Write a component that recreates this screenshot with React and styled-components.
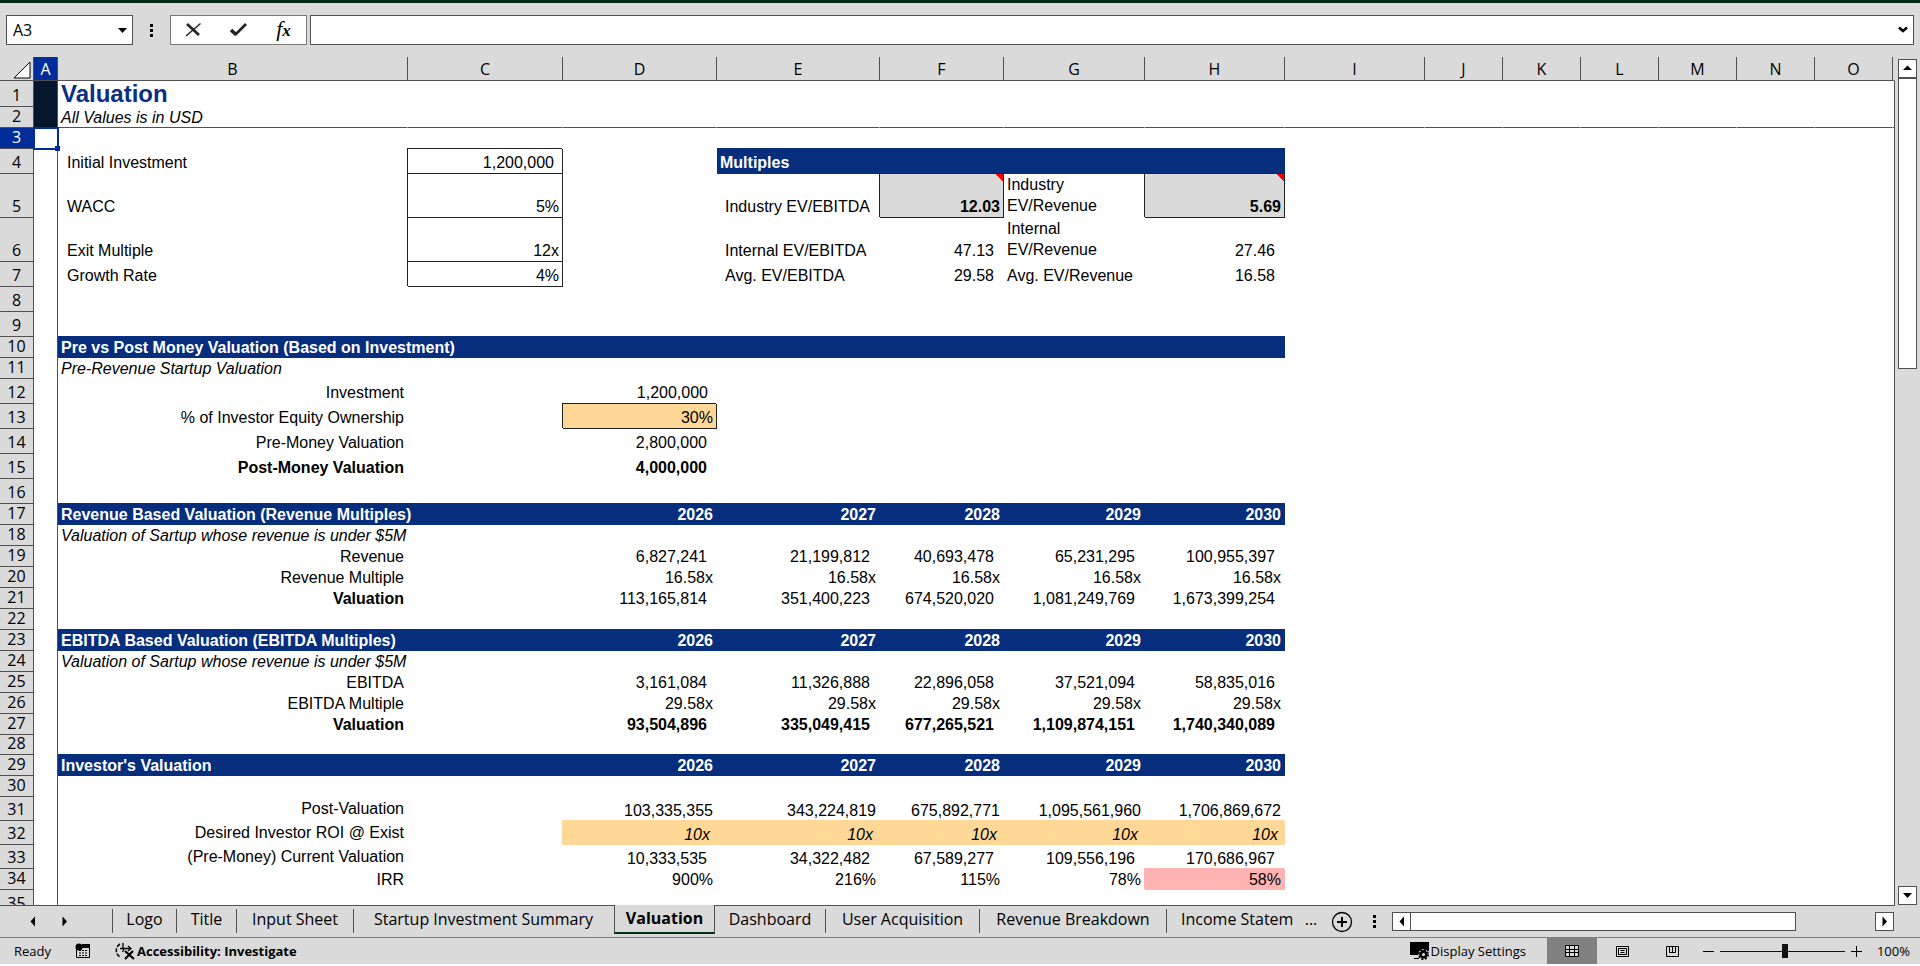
import React, { useState } from 'react'
import styled, { createGlobalStyle, css } from 'styled-components'

const GlobalStyle = createGlobalStyle`
  * {
    box-sizing: border-box;
  }

  body {
    margin: 0;
    background: #fff;
    color: #000;
    font-family: 'Open Sans', 'Noto Sans', sans-serif;
  }

  button, input {
    margin: 0;
    padding: 0;
    border: none;
    background: none;
    color: inherit;
    font: inherit;
  }
`

const columns = [
  { name: 'A', width: 24 },
  { name: 'B', width: 350 },
  { name: 'C', width: 155 },
  { name: 'D', width: 154 },
  { name: 'E', width: 163 },
  { name: 'F', width: 124 },
  { name: 'G', width: 141 },
  { name: 'H', width: 140 },
  { name: 'I', width: 140 },
  { name: 'J', width: 78 },
  { name: 'K', width: 78 },
  { name: 'L', width: 78 },
  { name: 'M', width: 78 },
  { name: 'N', width: 78 },
  { name: 'O', width: 78 },
]

const years = ['2026', '2027', '2028', '2029', '2030']
const yearColumns = ['D', 'E', 'F', 'G', 'H']

// helpers that build the cells of one row
const series = (values, style) => {
  const cells = {}
  values.forEach((value, i) => {
    cells[yearColumns[i]] = { text: value, align: 'right', ...style }
  })
  return cells
}

const label = (text, style) => ({ B: { text, align: 'right', ...style } })

const band = (title, values = []) => ({
  B: { text: title, bold: true, fill: 'navy' },
  C: { fill: 'navy' },
  ...series(yearColumns.map((_, i) => values[i]), { bold: true, fill: 'navy' }),
})

const note = (text) => ({ B: { text, italic: true } })
const boxed = { align: 'right', box: '#222' }
const money = { pad: 9 }

const rows = [
  { height: 26, cells: { A: { fill: 'ink' }, B: { text: 'Valuation', title: true, bold: true } } },
  { height: 21, line: true, cells: { A: { fill: 'ink' }, B: { text: 'All Values is in USD', italic: true } } },
  { height: 21, cells: { A: { selected: true } } },
  {
    height: 25,
    cells: {
      B: { text: 'Initial Investment', pad: 9 },
      C: { text: '1,200,000', ...boxed, pad: 8 },
      E: { text: 'Multiples', bold: true, fill: 'navy' },
      F: { fill: 'navy' },
      G: { fill: 'navy' },
      H: { fill: 'navy' },
    },
  },
  {
    height: 44,
    cells: {
      B: { text: 'WACC', pad: 9 },
      C: { text: '5%', ...boxed },
      E: { text: 'Industry EV/EBITDA', pad: 8 },
      F: { text: '12.03', bold: true, fill: 'grey', comment: true, ...boxed },
      G: { text: 'Industry EV/Revenue', wrap: true },
      H: { text: '5.69', bold: true, fill: 'grey', comment: true, ...boxed },
    },
  },
  {
    height: 44,
    cells: {
      B: { text: 'Exit Multiple', pad: 9 },
      C: { text: '12x', ...boxed },
      E: { text: 'Internal EV/EBITDA', pad: 8 },
      F: { text: '47.13', align: 'right', ...money },
      G: { text: 'Internal EV/Revenue', wrap: true },
      H: { text: '27.46', align: 'right', ...money },
    },
  },
  {
    height: 25,
    cells: {
      B: { text: 'Growth Rate', pad: 9 },
      C: { text: '4%', ...boxed },
      E: { text: 'Avg. EV/EBITDA', pad: 8 },
      F: { text: '29.58', align: 'right', ...money },
      G: { text: 'Avg. EV/Revenue' },
      H: { text: '16.58', align: 'right', ...money },
    },
  },
  { height: 25 },
  { height: 25 },
  { height: 21, cells: band('Pre vs Post Money Valuation (Based on Investment)') },
  { height: 21, cells: note('Pre-Revenue Startup Valuation') },
  { height: 25, cells: { ...label('Investment'), ...series(['1,200,000'], { pad: 8 }) } },
  {
    height: 25,
    cells: {
      ...label('% of Investor Equity Ownership'),
      ...series(['30%'], { fill: 'orange', box: '#222' }),
    },
  },
  { height: 25, cells: { ...label('Pre-Money Valuation'), ...series(['2,800,000'], money) } },
  {
    height: 25,
    cells: {
      ...label('Post-Money Valuation', { bold: true }),
      ...series(['4,000,000'], { ...money, bold: true }),
    },
  },
  { height: 25 },
  { height: 21, cells: band('Revenue Based Valuation (Revenue Multiples)', years) },
  { height: 21, cells: note('Valuation of Sartup whose revenue is under $5M') },
  {
    height: 21,
    cells: {
      ...label('Revenue'),
      ...series(['6,827,241', '21,199,812', '40,693,478', '65,231,295', '100,955,397'], money),
    },
  },
  {
    height: 21,
    cells: { ...label('Revenue Multiple'), ...series(Array(5).fill('16.58x')) },
  },
  {
    height: 21,
    cells: {
      ...label('Valuation', { bold: true }),
      ...series(['113,165,814', '351,400,223', '674,520,020', '1,081,249,769', '1,673,399,254'], money),
    },
  },
  { height: 21 },
  { height: 21, cells: band('EBITDA Based Valuation (EBITDA Multiples)', years) },
  { height: 21, cells: note('Valuation of Sartup whose revenue is under $5M') },
  {
    height: 21,
    cells: {
      ...label('EBITDA'),
      ...series(['3,161,084', '11,326,888', '22,896,058', '37,521,094', '58,835,016'], money),
    },
  },
  {
    height: 21,
    cells: { ...label('EBITDA Multiple'), ...series(Array(5).fill('29.58x')) },
  },
  {
    height: 21,
    cells: {
      ...label('Valuation', { bold: true }),
      ...series(['93,504,896', '335,049,415', '677,265,521', '1,109,874,151', '1,740,340,089'], {
        ...money,
        bold: true,
      }),
    },
  },
  { height: 20 },
  { height: 21, cells: band("Investor's Valuation", years) },
  { height: 21 },
  {
    height: 24,
    cells: {
      ...label('Post-Valuation', { middle: true }),
      ...series(['103,335,355', '343,224,819', '675,892,771', '1,095,561,960', '1,706,869,672']),
    },
  },
  {
    height: 24,
    cells: {
      ...label('Desired Investor ROI @ Exist', { middle: true }),
      ...series(Array(5).fill('10x'), { italic: true, fill: 'orange', pad: 6 }),
    },
  },
  {
    height: 24,
    cells: {
      ...label('(Pre-Money) Current Valuation', { middle: true }),
      ...series(['10,333,535', '34,322,482', '67,589,277', '109,556,196', '170,686,967'], money),
    },
  },
  {
    height: 21,
    cells: {
      ...label('IRR'),
      ...series(['900%', '216%', '115%', '78%']),
      H: { text: '58%', align: 'right', fill: 'pink' },
    },
  },
  { height: 25 },
]

const tabs = [
  { name: 'Logo', width: 64 },
  { name: 'Title', width: 60 },
  { name: 'Input Sheet', width: 117 },
  { name: 'Startup Investment Summary', width: 260 },
  { name: 'Valuation', width: 101 },
  { name: 'Dashboard', width: 111 },
  { name: 'User Acquisition', width: 154 },
  { name: 'Revenue Breakdown', width: 187 },
]

const Arrow = ({ dir }) => {
  const points = {
    up: '1,7 10,7 5.5,2.5',
    down: '1,3 10,3 5.5,8',
    left: '8,0.5 8,10.5 3.5,5.5',
    right: '3.5,0.5 3.5,10.5 8,5.5',
  }
  return (
    <svg width="11" height="11" viewBox="0 0 11 11" aria-hidden="true">
      <polygon points={points[dir]} />
    </svg>
  )
}

const Cell = ({ cell = {}, lined, tall }) => (
  <Td
    $align={cell.align}
    $bold={cell.bold}
    $italic={cell.italic}
    $title={cell.title}
    $fill={cell.fill}
    $box={cell.box}
    $pad={cell.pad}
    $wrap={cell.wrap}
    $middle={cell.middle}
    $comment={cell.comment}
    $selected={cell.selected}
    $lined={lined}
    $tall={tall}
  >
    {cell.text}
  </Td>
)

const App = () => {
  const [activeTab, setActiveTab] = useState('Valuation')
  const [zoom, setZoom] = useState(100)
  const [formula, setFormula] = useState('')

  return (
    <Page>
      <GlobalStyle />
      <TopStrip />

      <FormulaRow>
        <NameBox>
          <input aria-label="Name box" defaultValue="A3" />
          <button aria-label="Open name list"><Arrow dir="down" /></button>
        </NameBox>
        <Dots />
        <FormulaTools>
          <button aria-label="Cancel">
            <svg width="18" height="16" viewBox="0 0 18 16" fill="none" stroke="#222">
              <path d="M2 2L14 13" strokeWidth="2.6" />
              <path d="M15.500 1.500L1 14" strokeWidth="1.400" />
            </svg>
          </button>
          <button aria-label="Enter">
            <svg width="18" height="16" viewBox="0 0 18 16" fill="none" stroke="#222">
              <path d="M1 8L6 12.500" strokeWidth="3.600" />
              <path d="M5 13L16 2" strokeWidth="2.600" />
            </svg>
          </button>
          <button aria-label="Insert function"><Fx>f<small>x</small></Fx></button>
        </FormulaTools>
        <FormulaBox>
          <input
            aria-label="Formula bar"
            value={formula}
            onChange={(e) => setFormula(e.target.value)}
          />
          <button aria-label="Expand formula bar">
            <svg width="10" height="8" viewBox="0 0 10 8" fill="none" stroke="#000" strokeWidth="2.500">
              <path d="M1 1.500L5 5L9 1.500" />
            </svg>
          </button>
        </FormulaBox>
      </FormulaRow>

      <SheetArea>
        <Grid>
          <Table>
            <colgroup>
              <Col $width={34} />
              {columns.map((col) => <Col key={col.name} $width={col.width} />)}
              <col />
            </colgroup>
            <thead>
              <tr>
                <Corner>
                  <svg width="18" height="18" viewBox="0 0 18 18" aria-hidden="true">
                    <path d="M1 17L17 1V17Z" fill="#fff" stroke="#000" />
                  </svg>
                </Corner>
                {columns.map((col) => (
                  <ColHead key={col.name} scope="col" $active={col.name === 'A'}>{col.name}</ColHead>
                ))}
                <Filler as="th" $head />
              </tr>
            </thead>
            <tbody>
              {rows.map((row, i) => (
                <Row key={i} $height={row.height}>
                  <RowHead scope="row" $active={i === 2}>{i + 1}</RowHead>
                  {columns.map((col) => (
                    <Cell
                      key={col.name}
                      cell={row.cells?.[col.name]}
                      lined={row.line}
                      tall={row.height === 25 || row.height === 44}
                    />
                  ))}
                  <Filler $line={row.line} />
                </Row>
              ))}
            </tbody>
          </Table>
        </Grid>
        <VScroll>
          <ScrollButton aria-label="Scroll up"><Arrow dir="up" /></ScrollButton>
          <VTrack><VThumb /></VTrack>
          <ScrollButton aria-label="Scroll down"><Arrow dir="down" /></ScrollButton>
        </VScroll>
      </SheetArea>

      <TabBar>
        <TabArrows>
          <button aria-label="Previous sheet"><Arrow dir="left" /></button>
          <button aria-label="Next sheet"><Arrow dir="right" /></button>
        </TabArrows>
        <Tabs>
          {tabs.map((tab, i) => (
            <Tab
              key={tab.name}
              $width={tab.width}
              $active={tab.name === activeTab}
              $last={tabs[i + 1]?.name === activeTab}
              onClick={() => setActiveTab(tab.name)}
            >
              {tab.name}
            </Tab>
          ))}
          <CutTab>Income Statem</CutTab>
          <More aria-label="More sheets">...</More>
          <AddSheet aria-label="New sheet">
            <svg width="22" height="22" viewBox="0 0 22 22" fill="none" stroke="#000">
              <circle cx="11" cy="11" r="9.500" strokeWidth="1.300" />
              <path d="M6 11H16M11 6V16" strokeWidth="2" />
            </svg>
          </AddSheet>
        </Tabs>
        <Dots $narrow />
        <HScroll>
          <ScrollButton aria-label="Scroll left"><Arrow dir="left" /></ScrollButton>
          <HTrack><HThumb /></HTrack>
          <ScrollButton aria-label="Scroll right"><Arrow dir="right" /></ScrollButton>
        </HScroll>
      </TabBar>

      <StatusBar>
        <StatusGroup>
          <span>Ready</span>
          <button aria-label="Record macro">
            <svg width="16" height="16" viewBox="0 0 16 16" aria-hidden="true">
              <path d="M1.500 5V14.500H14.500V2" fill="none" stroke="#000" />
              <path d="M7 1H15V5H7Z" />
              <circle cx="4" cy="4" r="3.500" />
              <path
                d="M4 7.500H6M7 7.500H9M10 7.500H12M4 10H6M7 10H9M10 10H12M4 12.500H6M7 12.500H9M10 12.500H12"
                stroke="#000"
              />
            </svg>
          </button>
          <Accessibility>
            <svg width="20" height="18" viewBox="0 0 20 18" fill="none" stroke="#000">
              <path d="M5 2C0 5 0 12 5 15" strokeWidth="1.500" strokeDasharray="4 1.500" />
              <path d="M8 1V6M5 6.500H16M13 4L16 6.500L13 9M9 7L7.500 10" strokeWidth="1.300" />
              <path d="M10 9L19 17M18 9L10 17" strokeWidth="2.200" />
            </svg>
            Accessibility: Investigate
          </Accessibility>
        </StatusGroup>
        <StatusGroup $end>
          <DisplaySettings>
            <svg width="20" height="18" viewBox="0 0 20 18" aria-hidden="true">
              <path d="M0 0H19V9H9V13H0Z" />
              <path d="M4 16.500H9" stroke="#000" />
              <circle cx="13.500" cy="12.500" r="5" fill="none" stroke="#dadada" />
              <circle cx="13.500" cy="12.500" r="4" />
              <circle
                cx="13.500"
                cy="12.500"
                r="4.600"
                fill="none"
                stroke="#000"
                strokeWidth="1.800"
                strokeDasharray="2 1.600"
              />
              <circle cx="13.500" cy="12.500" r="1.600" fill="#dadada" />
            </svg>
            Display Settings
          </DisplaySettings>
          <ViewButton aria-label="Normal" $active>
            <svg width="14" height="12" viewBox="0 0 14 12" stroke="#000" fill="#dadada">
              <path d="M0.500 0.500H13.500V11.500H0.500ZM0.500 4.500H13.500M0.500 7.500H13.500M4.500 0.500V11.500M9.500 0.500V11.500" />
            </svg>
          </ViewButton>
          <ViewButton aria-label="Page layout">
            <svg width="13" height="11" viewBox="0 0 13 11" stroke="#000" fill="none">
              <path d="M0.500 0.500H12.500V10.500H0.500ZM2.500 2.500H10.500V8.500H2.500ZM4.500 4.500H8.500M4.500 6.500H8.500" />
            </svg>
          </ViewButton>
          <ViewButton aria-label="Page break preview">
            <svg width="13" height="11" viewBox="0 0 13 11" stroke="#000" fill="none">
              <path d="M0.500 0.500H12.500V10.500H0.500ZM3.500 0.500V6.500H9.500V0.500M6.500 0.500V6.500" />
            </svg>
          </ViewButton>
          <ZoomControl>
            <button aria-label="Zoom out" onClick={() => setZoom(zoom - 10)}>
              <svg width="11" height="11" viewBox="0 0 11 11" stroke="#000"><path d="M0 5.500H11" /></svg>
            </button>
            <ZoomSlider
              type="range"
              aria-label="Zoom"
              min="0"
              max="192"
              value={zoom}
              onChange={(e) => setZoom(Number(e.target.value))}
            />
            <button aria-label="Zoom in" onClick={() => setZoom(zoom + 10)}>
              <svg width="11" height="11" viewBox="0 0 11 11" stroke="#000"><path d="M0 5.500H11M5.500 0V11" /></svg>
            </button>
            <ZoomValue>{zoom}%</ZoomValue>
          </ZoomControl>
        </StatusGroup>
      </StatusBar>
    </Page>
  )
}

const chrome = '#dadada'
const line = '#505050'
const accent = '#002d9a'

const fills = {
  navy: '#072d7d',
  ink: '#05172d',
  grey: '#dadada',
  orange: '#ffd898',
  pink: '#ffb4b4',
}

const Page = styled.div`
  display: flex;
  flex-direction: column;
  height: 100vh;
  padding-bottom: 2px;
  overflow: hidden;
`

const TopStrip = styled.div`
  height: 3px;
  flex: none;
  background: #002b11;
`

/* formula bar */
const FormulaRow = styled.div`
  display: flex;
  align-items: center;
  flex: none;
  padding: 12px 6px;
  background: ${chrome};
`

const NameBox = styled.div`
  display: flex;
  align-items: center;
  width: 127px;
  height: 30px;
  border: 1px solid ${line};
  background: #fff;

  input {
    flex: 1;
    min-width: 0;
    padding-left: 6px;
    font-size: 16px;
  }

  button {
    display: flex;
    padding: 4px;
  }
`

const Dots = styled.span`
  width: ${(p) => (p.$narrow ? 36 : 37)}px;
  height: 13px;
  flex: none;
  background: linear-gradient(#000, #000) center top / 3px 3px no-repeat,
    linear-gradient(#000, #000) center / 3px 3px no-repeat,
    linear-gradient(#000, #000) center bottom / 3px 3px no-repeat;
`

const FormulaTools = styled.div`
  display: flex;
  width: 137px;
  height: 30px;
  margin-right: 3px;
  border: 1px solid #7a7a7a;
  background: #fff;

  button {
    display: flex;
    flex: 1;
    align-items: center;
    justify-content: center;
  }
`

const Fx = styled.span`
  font: italic 22px/24px 'Liberation Serif', serif;

  small {
    font-size: 17px;
    font-weight: 700;
  }
`

const FormulaBox = styled.div`
  display: flex;
  align-items: center;
  flex: 1;
  height: 30px;
  border: 1px solid ${line};
  background: #fff;

  input {
    flex: 1;
    min-width: 0;
    padding: 0 6px;
    font-size: 16px;
  }

  button {
    display: flex;
    padding: 5px;
  }
`

/* sheet */
const SheetArea = styled.div`
  display: flex;
  flex: 1;
  min-height: 0;
  background: ${chrome};
`

const Grid = styled.div`
  flex: 1;
  min-width: 0;
  overflow: hidden;
  border-bottom: 1px solid ${line};
  background: linear-gradient(#fff, #fff) 0 24px no-repeat;
`

const Table = styled.table`
  width: 100%;
  table-layout: fixed;
  border-collapse: separate;
  border-spacing: 0;
  font-size: 16px;
`

const Col = styled.col`
  width: ${(p) => p.$width}px;
`

const headCell = css`
  padding: 0 0 3px;
  border-right: 1px solid ${line};
  border-bottom: 1px solid ${line};
  background: ${(p) => (p.$active ? accent : chrome)};
  color: ${(p) => (p.$active ? '#fff' : '#000')};
  font-weight: 400;
  line-height: 16px;
  text-align: center;
  vertical-align: bottom;
`

const ColHead = styled.th`
  ${headCell}
  height: 24px;
`

const RowHead = styled.th`
  ${headCell}
`

const Corner = styled.td`
  padding: 0 2px 1px 0;
  border-right: 1px solid ${line};
  border-bottom: 1px solid ${line};
  background: ${chrome};
  line-height: 0;
  text-align: right;
  vertical-align: bottom;
`

const Row = styled.tr`
  height: ${(p) => p.$height}px;
`

const Td = styled.td`
  padding: 0 ${(p) => (p.$align === 'right' ? p.$pad || 3 : 0)}px ${(p) => (p.$tall ? 1 : 0)}px
    ${(p) => (p.$align === 'right' ? 0 : p.$pad || 3)}px;
  border: 0 solid transparent;
  border-right-width: 1px;
  border-bottom-width: 1px;
  font-family: 'Liberation Sans', Arial, sans-serif;
  font-weight: ${(p) => (p.$bold ? 700 : 400)};
  font-style: ${(p) => (p.$italic ? 'italic' : 'normal')};
  line-height: ${(p) => (p.$wrap ? 21 : 19)}px;
  text-align: ${(p) => p.$align || 'left'};
  vertical-align: ${(p) => (p.$middle ? 'middle' : 'bottom')};
  white-space: ${(p) => (p.$wrap ? 'normal' : 'nowrap')};

  ${(p) => p.$title && css`
    color: #0a2f86;
    font-size: 24px;
    line-height: 24px;
  `}

  ${(p) => p.$fill && css`
    background: ${fills[p.$fill]};
  `}

  ${(p) => p.$fill === 'navy' && css`
    box-shadow: 0 -1px 0 ${fills.navy};
    color: #fff;
  `}

  ${(p) => (p.$fill === 'orange' || p.$fill === 'pink') && css`
    box-shadow: -1px -1px 0 ${fills[p.$fill]};
  `}

  ${(p) => p.$box && css`
    border-color: ${p.$box};
    box-shadow: -1px -1px 0 ${p.$box};
  `}

  ${(p) => p.$comment && css`
    background: linear-gradient(45deg, transparent 50%, #f00 50%) right top / 7px 8px no-repeat,
      ${fills.grey};
  `}

  /* column A carries the frozen pane line on its right */
  &:nth-child(2) {
    border-right-color: ${line};
    border-bottom-width: ${(p) => (p.$lined ? 1 : 0)}px;
  }

  ${(p) => p.$lined && css`
    border-bottom-color: ${line};
  `}

  ${(p) => p.$selected && css`
    position: relative;
    outline: 2px solid ${accent};
    outline-offset: -1px;

    &::after {
      content: '';
      position: absolute;
      right: -3px;
      bottom: -2px;
      width: 5px;
      height: 5px;
      background: ${accent};
    }
  `}
`

const Filler = styled.td`
  padding: 0;
  border-right: 1px solid ${(p) => (p.$head ? chrome : line)};
  border-bottom: ${(p) => (p.$head || p.$line ? 1 : 0)}px solid ${line};
  background: ${(p) => (p.$head ? chrome : 'none')};
`

/* scroll bars */
const ScrollButton = styled.button`
  display: flex;
  align-items: center;
  justify-content: center;
  flex: none;
  width: 19px;
  height: 19px;
  border: 1px solid ${line};
  background: #fff;
`

const VScroll = styled.div`
  display: flex;
  flex-direction: column;
  flex: none;
  padding: 2px 3px 1px;
`

const VTrack = styled.div`
  flex: 1;
`

const VThumb = styled.div`
  height: 36%;
  border: 1px solid ${line};
  background: #fff;
`

const HScroll = styled.div`
  display: flex;
  flex: 1;
  margin-right: 26px;
`

const HTrack = styled.div`
  flex: 1;
`

const HThumb = styled.div`
  width: 83%;
  height: 19px;
  border: 1px solid ${line};
  border-left: none;
  background: #fff;
`

/* sheet tabs */
const TabBar = styled.div`
  display: flex;
  align-items: center;
  flex: none;
  height: 31px;
  background: ${chrome};
`

const TabArrows = styled.div`
  display: flex;
  gap: 21px;
  align-items: center;
  width: 112px;
  height: 24px;
  padding-left: 27px;
  flex: none;

  button {
    display: flex;
  }
`

const Tabs = styled.div`
  display: flex;
  align-self: flex-start;
  height: 31px;
  padding-top: 3px;
  font-size: 16px;
`

const Tab = styled.button`
  flex: none;
  width: ${(p) => p.$width}px;
  height: 24px;
  padding-bottom: 4px;
  border-right: 1px solid ${(p) => (p.$last ? 'transparent' : line)};
  line-height: 20px;
  white-space: nowrap;

  &:first-child {
    width: 65px;
    border-left: 1px solid ${line};
  }

  ${(p) => p.$active && css`
    position: relative;
    height: 29px;
    margin-top: -4px;
    padding-bottom: 2px;
    border-left: 1px solid ${line};
    border-bottom: 2px solid #00300f;
    background: ${chrome};
    font-weight: 700;
  `}
`

const CutTab = styled.button`
  width: 130px;
  height: 24px;
  padding: 0 0 4px 14px;
  line-height: 20px;
  text-align: left;
  white-space: nowrap;
`

const More = styled.button`
  width: 28px;
  height: 24px;
  padding-bottom: 4px;
  line-height: 20px;
`

const AddSheet = styled.button`
  display: flex;
  align-items: center;
  justify-content: flex-end;
  width: 28px;
  height: 26px;
  margin-right: 3px;
`

/* status bar */
const StatusBar = styled.div`
  display: flex;
  align-items: stretch;
  justify-content: space-between;
  flex: none;
  height: 27px;
  border-top: 1px solid #808080;
  background: ${chrome};
  font-size: 13px;
`

const StatusGroup = styled.div`
  display: flex;
  align-items: center;
  gap: ${(p) => (p.$end ? 0 : 24)}px;
  padding: ${(p) => (p.$end ? '0 10px 0 0' : '0 0 0 14px')};

  button {
    display: flex;
    align-items: center;
  }
`

const Accessibility = styled.button`
  gap: 2px;
  font-weight: 700;
`

const DisplaySettings = styled.button`
  gap: 1px;
  margin-right: 21px;
`

const ViewButton = styled.button`
  justify-content: center;
  width: 50px;
  height: 26px;
  background: ${(p) => (p.$active ? '#808080' : 'none')};
`

const ZoomControl = styled.div`
  display: flex;
  align-items: center;
  gap: 6px;
  padding-left: 6px;
`

const ZoomSlider = styled.input`
  width: 125px;
  height: 15px;
  appearance: none;
  background: linear-gradient(#111, #111) center / 100% 1px no-repeat;

  &::-webkit-slider-thumb {
    appearance: none;
    width: 6px;
    height: 14px;
    background: #111;
  }
`

const ZoomValue = styled.span`
  width: 42px;
  text-align: right;
`

export default App
